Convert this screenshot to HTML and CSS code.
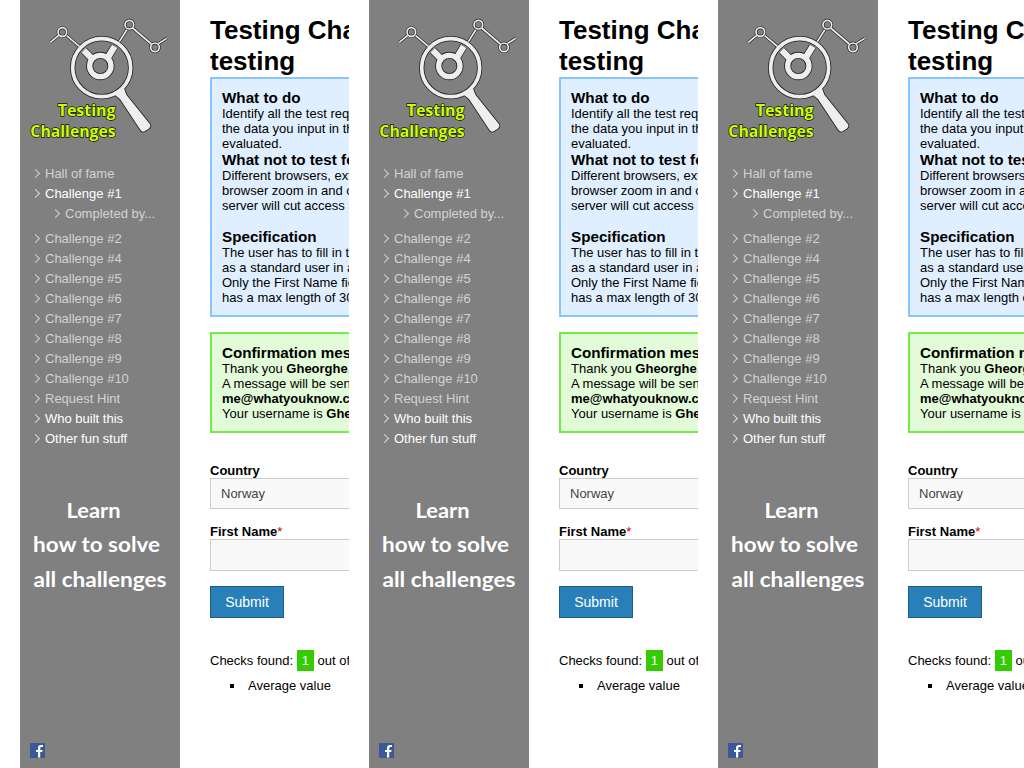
FILE: index.html
```html
<!DOCTYPE html>
<html lang="en">
<head>
<meta charset="utf-8">
<title>Testing Challenges</title>
<link rel="stylesheet" href="styles.css">
</head>
<body>
<svg class="defs" aria-hidden="true">
  <symbol id="logo" viewBox="0 0 480 420">
    <g class="logo-edge">
      <path class="w11" d="M91 97L116 76M140 77L178 109M298 95L320 60M338 54L394 102M415 101L440 85"/>
      <circle class="w11" cx="127" cy="66" r="13"/><circle class="w11" cx="328" cy="44" r="13"/><circle class="w11" cx="405" cy="112" r="13"/>
      <circle class="w16" cx="245" cy="173" r="87"/><circle class="w22" cx="241" cy="168" r="32"/>
      <path class="w24" d="M191 121L214 144M284 109L264 142"/>
      <path class="w6" d="M284 254L312 235L319 254L390 343Q394 350 386 356L374 364Q365 368 360 358L300 267Z"/>
    </g>
    <g class="logo-line">
      <path class="w5" d="M91 97L116 76M140 77L178 109M298 95L320 60M338 54L394 102M415 101L440 85"/>
      <circle class="w5" cx="127" cy="66" r="13"/><circle class="w5" cx="328" cy="44" r="13"/><circle class="w5" cx="405" cy="112" r="13"/>
      <circle class="w10" cx="245" cy="173" r="87"/><circle class="w16" cx="241" cy="168" r="32"/>
      <path class="w19" d="M191 121L214 144M284 109L264 142"/>
      <path class="logo-handle" d="M284 254L312 235L319 254L390 343Q394 350 386 356L374 364Q365 368 360 358L300 267Z"/>
    </g>
    <text class="logo-text" x="113" y="319" textLength="174" lengthAdjust="spacingAndGlyphs">Testing</text>
    <text class="logo-text" x="31" y="382" textLength="256" lengthAdjust="spacingAndGlyphs">Challenges</text>
  </symbol>
  <symbol id="learn" viewBox="0 0 160 120">
    <text class="learn-text" x="46.5" y="38" textLength="54" lengthAdjust="spacingAndGlyphs">Learn</text>
    <text class="learn-text" x="13" y="72" textLength="127" lengthAdjust="spacingAndGlyphs">how to solve</text>
    <text class="learn-text" x="13.5" y="107" textLength="133" lengthAdjust="spacingAndGlyphs">all challenges</text>
  </symbol>
  <symbol id="facebook" viewBox="0 0 15 15">
    <rect width="15" height="15" rx="1" fill="#3b5998"/>
    <path d="M8 14.5V9H6V7H8V5Q8 2 11 2H13V4H11.6Q10.2 4 10.2 5.4V7H12.6L12.3 9H10.2V14.5Z" fill="#fff"/>
  </symbol>
</svg>
<div class="frames">
  <section class="frame">
    <aside class="sidebar">
      <svg class="logo"><use href="#logo"/></svg>
      <ul class="menu">
        <li>Hall of fame</li><li class="on">Challenge #1</li><li class="sub">Completed by...</li>
        <li>Challenge #2</li><li>Challenge #4</li><li>Challenge #5</li><li>Challenge #6</li><li>Challenge #7</li><li>Challenge #8</li><li>Challenge #9</li><li>Challenge #10</li><li>Request Hint</li>
        <li class="on">Who built this</li><li class="on">Other fun stuff</li>
      </ul>
      <svg class="learn"><use href="#learn"/></svg>
      <svg class="facebook"><use href="#facebook"/></svg>
    </aside>
    <main class="content">
      <h1>Testing Challenges<br>testing</h1>
      <div class="box info">
        <h2>What to do</h2>
        <p>Identify all the test requirements<br>the data you input in the<br>evaluated.</p>
        <h2>What not to test for</h2>
        <p>Different browsers, extensions<br>browser zoom in and out<br>server will cut access a</p>
        <h2 class="spaced">Specification</h2>
        <p>The user has to fill in the<br>as a standard user in a<br>Only the First Name field<br>has a max length of 30</p>
      </div>
      <div class="box success">
        <h2>Confirmation message</h2>
        <p>Thank you <b>Gheorghe</b>.<br>A message will be sent<br><b>me@whatyouknow.com</b><br>Your username is <b>Gheorghe</b></p>
      </div>
      <div class="field"><b>Country</b><div class="control">Norway</div></div>
      <div class="field name"><b>First Name</b><span class="required">*</span><div class="control"></div></div>
      <button class="submit">Submit</button>
      <div class="checks">Checks found: <span class="count">1</span> out of</div>
      <ul class="found"><li>Average value</li></ul>
    </main>
  </section>
  <section class="frame">
    <aside class="sidebar">
      <svg class="logo"><use href="#logo"/></svg>
      <ul class="menu">
        <li>Hall of fame</li><li class="on">Challenge #1</li><li class="sub">Completed by...</li>
        <li>Challenge #2</li><li>Challenge #4</li><li>Challenge #5</li><li>Challenge #6</li><li>Challenge #7</li><li>Challenge #8</li><li>Challenge #9</li><li>Challenge #10</li><li>Request Hint</li>
        <li class="on">Who built this</li><li class="on">Other fun stuff</li>
      </ul>
      <svg class="learn"><use href="#learn"/></svg>
      <svg class="facebook"><use href="#facebook"/></svg>
    </aside>
    <main class="content">
      <h1>Testing Challenges<br>testing</h1>
      <div class="box info">
        <h2>What to do</h2>
        <p>Identify all the test requirements<br>the data you input in the<br>evaluated.</p>
        <h2>What not to test for</h2>
        <p>Different browsers, extensions<br>browser zoom in and out<br>server will cut access a</p>
        <h2 class="spaced">Specification</h2>
        <p>The user has to fill in the<br>as a standard user in a<br>Only the First Name field<br>has a max length of 30</p>
      </div>
      <div class="box success">
        <h2>Confirmation message</h2>
        <p>Thank you <b>Gheorghe</b>.<br>A message will be sent<br><b>me@whatyouknow.com</b><br>Your username is <b>Gheorghe</b></p>
      </div>
      <div class="field"><b>Country</b><div class="control">Norway</div></div>
      <div class="field name"><b>First Name</b><span class="required">*</span><div class="control"></div></div>
      <button class="submit">Submit</button>
      <div class="checks">Checks found: <span class="count">1</span> out of</div>
      <ul class="found"><li>Average value</li></ul>
    </main>
  </section>
  <section class="frame">
    <aside class="sidebar">
      <svg class="logo"><use href="#logo"/></svg>
      <ul class="menu">
        <li>Hall of fame</li><li class="on">Challenge #1</li><li class="sub">Completed by...</li>
        <li>Challenge #2</li><li>Challenge #4</li><li>Challenge #5</li><li>Challenge #6</li><li>Challenge #7</li><li>Challenge #8</li><li>Challenge #9</li><li>Challenge #10</li><li>Request Hint</li>
        <li class="on">Who built this</li><li class="on">Other fun stuff</li>
      </ul>
      <svg class="learn"><use href="#learn"/></svg>
      <svg class="facebook"><use href="#facebook"/></svg>
    </aside>
    <main class="content">
      <h1>Testing Challenges<br>testing</h1>
      <div class="box info">
        <h2>What to do</h2>
        <p>Identify all the test requirements<br>the data you input in the<br>evaluated.</p>
        <h2>What not to test for</h2>
        <p>Different browsers, extensions<br>browser zoom in and out<br>server will cut access a</p>
        <h2 class="spaced">Specification</h2>
        <p>The user has to fill in the<br>as a standard user in a<br>Only the First Name field<br>has a max length of 30</p>
      </div>
      <div class="box success">
        <h2>Confirmation message</h2>
        <p>Thank you <b>Gheorghe</b>.<br>A message will be sent<br><b>me@whatyouknow.com</b><br>Your username is <b>Gheorghe</b></p>
      </div>
      <div class="field"><b>Country</b><div class="control">Norway</div></div>
      <div class="field name"><b>First Name</b><span class="required">*</span><div class="control"></div></div>
      <button class="submit">Submit</button>
      <div class="checks">Checks found: <span class="count">1</span> out of</div>
      <ul class="found"><li>Average value</li></ul>
    </main>
  </section>
</div>
</body>
</html>
```
FILE: styles.css
```css
* { box-sizing: border-box; }
body { margin: 0; background: #fff; color: #000; font: 13px/15px "Liberation Sans", Arial, sans-serif; overflow: hidden; }
h1, h2, p, ul { margin: 0; padding: 0; }
.defs { display: none; }
.frames { display: flex; width: 1024px; height: 768px; overflow: hidden; }
.frame { display: flex; flex: 0 0 349px; height: 768px; padding-left: 20px; overflow: hidden; }

/* Sidebar */
.sidebar { display: flex; flex-direction: column; flex: 0 0 160px; background: #808080; padding: 10px 0; }
.logo { display: block; flex: none; width: 160px; height: 140px; }
.w5 { stroke-width: 5; }
.w6 { stroke-width: 5; }
.w10 { stroke-width: 11; }
.w11 { stroke-width: 9; }
.w16 { stroke-width: 16; }
.w19 { stroke-width: 19; }
.w22 { stroke-width: 21; }
.w24 { stroke-width: 23; }
.logo-edge { fill: none; stroke: #222; }
.logo-line { fill: none; stroke: #eee; }
.logo-handle { fill: #eee; stroke: none; }
.logo-text { font: 700 46px "Open Sans", sans-serif; fill: #cf0; stroke: #111; stroke-width: 4px; paint-order: stroke; }
.menu { list-style: none; margin-top: 13px; color: #d3d3d3; }
.menu li { display: flex; align-items: center; height: 20px; padding-left: 13px; white-space: nowrap; }
.menu li::before { content: ""; width: 6px; height: 6px; margin: 1px 6px 0 0; margin-left: -1px; border: solid currentColor; border-width: 1.4px 1.4px 0 0; transform: rotate(45deg) scale(.9); }
.menu .on { color: #fff; }
.menu .on::before { border-color: #ddd; }
.menu .sub { margin-bottom: 5px; padding-left: 33px; }
.learn { display: block; flex: none; width: 160px; height: 120px; margin-top: 32px; }
.learn-text { font: 700 21.5px "Lato", sans-serif; fill: #fff; }
.facebook { display: block; flex: none; width: 15px; height: 15px; margin: auto 0 0 10px; }

/* Page content */
.content { flex: none; width: 600px; padding: 15px 0 0 30px; white-space: nowrap; }
h1 { font-size: 26px; line-height: 31px; }
.box { border: 2px solid; padding: 10px; }
.box h2 { font-size: 15.21px; line-height: 17px; }
.box .spaced { margin-top: 15px; }
.info { border-color: #88c4ff; background: #e0efff; }
.success { margin-top: 15px; border-color: #75ea49; background: #e2fbd8; }
.field { margin-top: 30px; }
.name { margin-top: 15px; }
.control { height: 31px; border: 1px solid #ccc; background: #f9f9f9; padding: 7px 10px; color: #444; }
.name .control { height: 32px; }
.required { color: #c00; }
.submit { display: block; width: 74px; height: 32px; margin-top: 15px; padding: 0; border: 1px solid #1c5f8a; background: #2980b9; color: #fff; font: 14px "Liberation Sans", Arial, sans-serif; }
.checks { margin-top: 35px; }
.count { padding: 3px 5px; background: #3c0; color: #fff; }
.found { margin-top: 10px; padding-left: 20px; list-style: none; }
.found li { display: flex; align-items: center; }
.found li::before { content: ""; width: 4px; height: 4px; margin: 1px 14px 0 0; background: #000; }
```
